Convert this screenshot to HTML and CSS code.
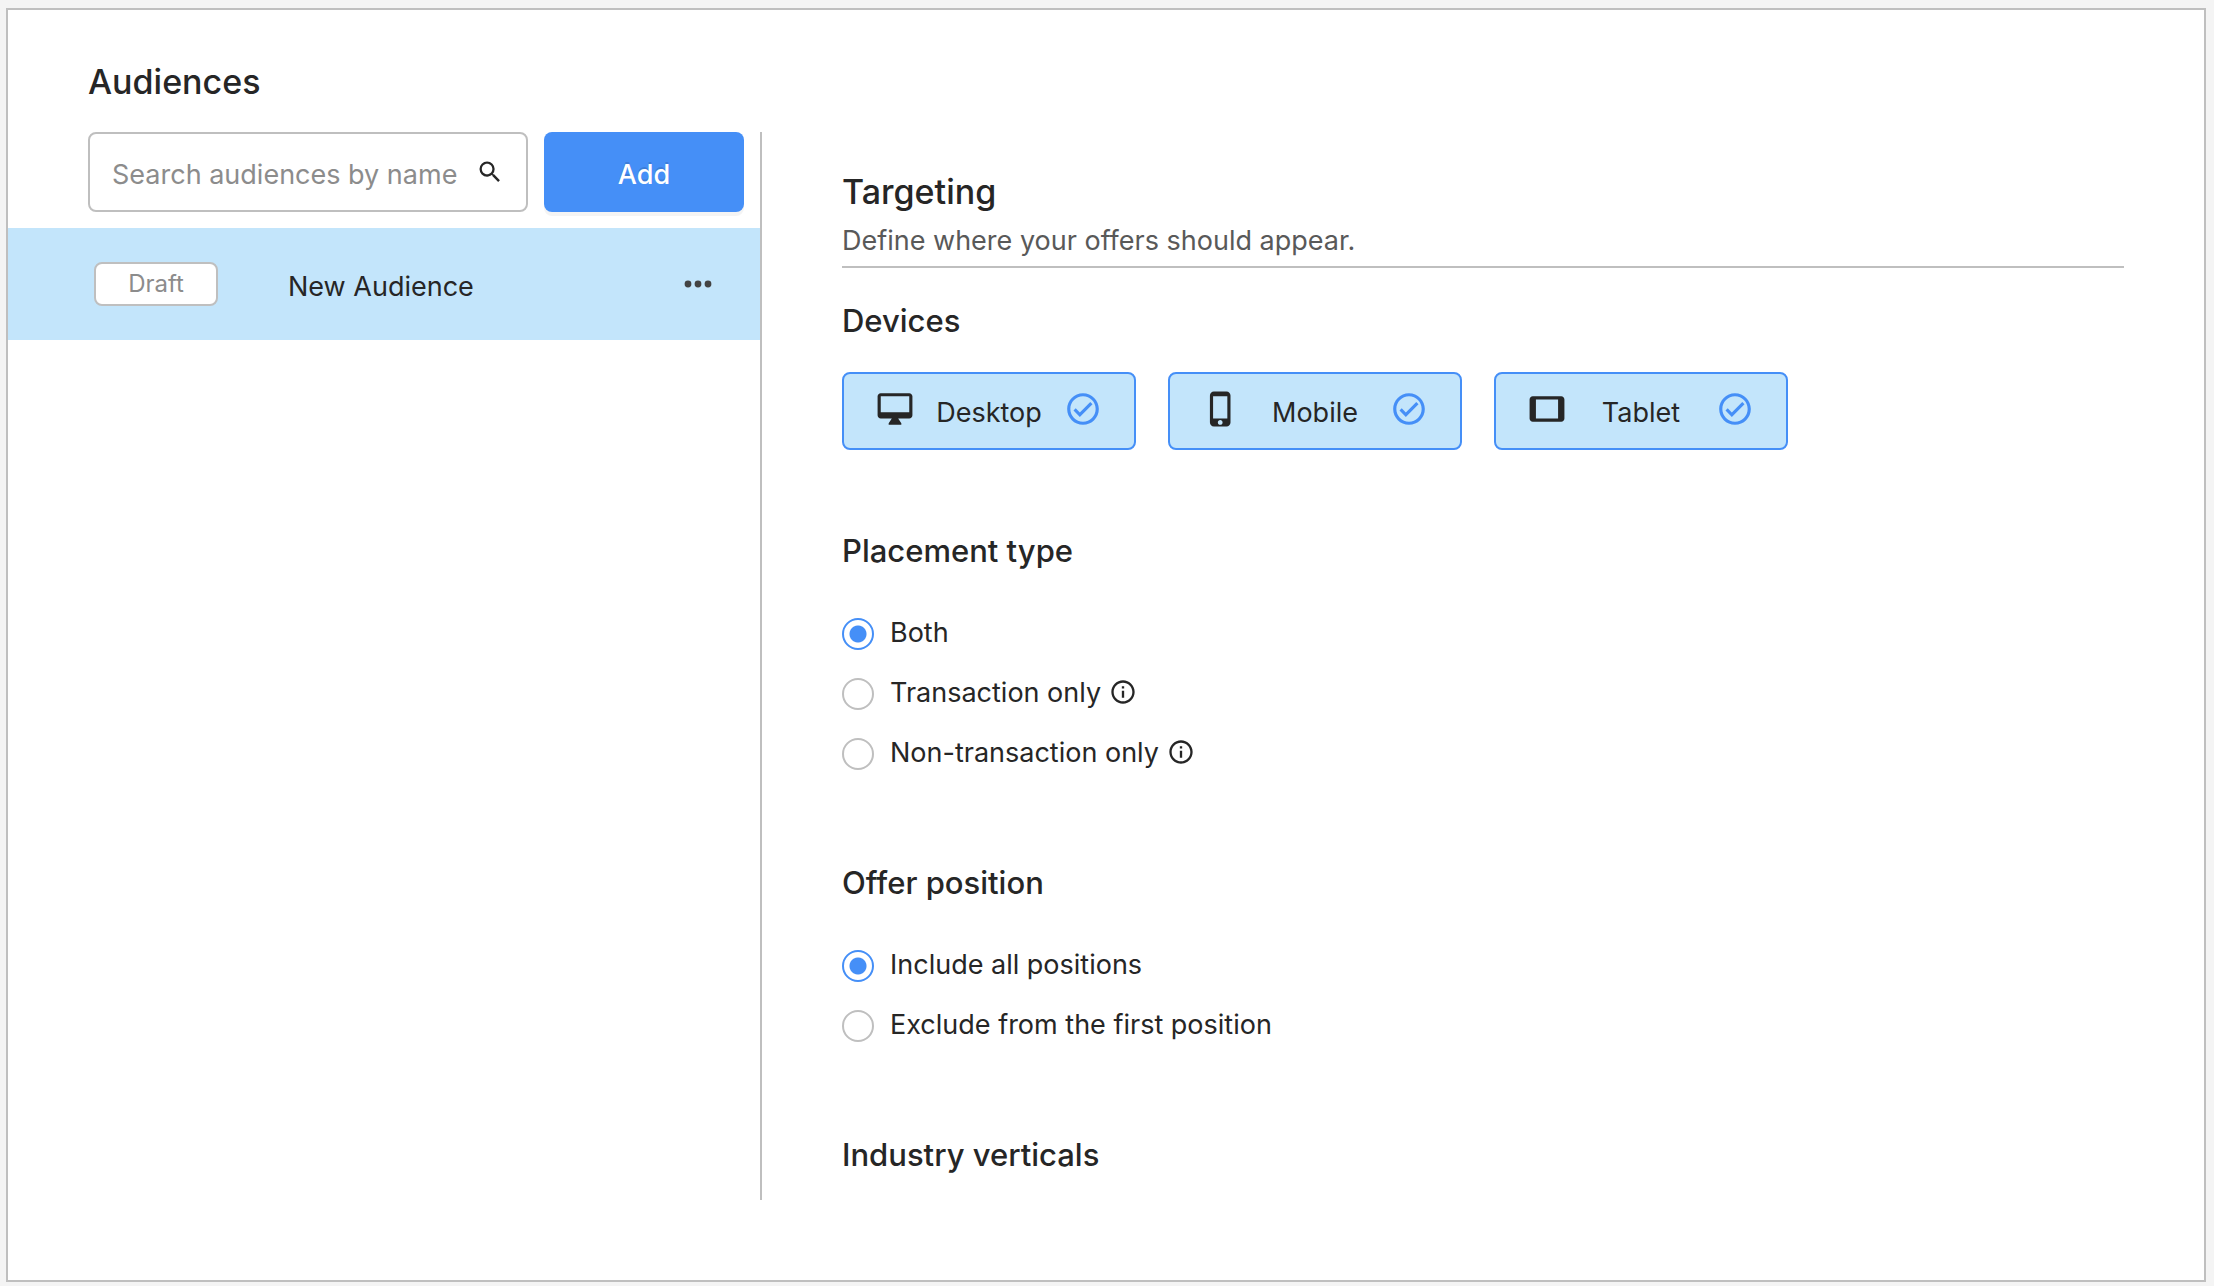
FILE: index.html
```html
<!DOCTYPE html>
<html lang="en">
    <head>
        <meta charset="utf-8">
        <title>Audiences</title>
        <link rel="stylesheet" href="styles.css">
    </head>
    <body>
        <main class="panel">
            <h1 class="title">Audiences</h1>
            <div class="columns">
                <aside class="sidebar">
                    <div class="toolbar">
                        <div class="search">
                            <input class="search-input" type="text" placeholder="Search audiences by name" aria-label="Search audiences by name">
                            <svg class="search-icon" viewBox="0 0 24 24"><path d="M15.5 14h-.79l-.28-.27A6.47 6.47 0 0 0 16 9.5 6.5 6.5 0 1 0 9.5 16c1.61 0 3.09-.59 4.23-1.57l.27.28v.79l5 4.99L20.49 19l-4.99-5zm-6 0C7.01 14 5 11.99 5 9.5S7.01 5 9.5 5 14 7.01 14 9.5 11.99 14 9.5 14z"/></svg>
                        </div>
                        <button class="add" type="button">Add</button>
                    </div>
                    <div class="audience">
                        <span class="tag">Draft</span>
                        <span class="audience-name">New Audience</span>
                        <button class="more" type="button" aria-label="More actions">
                            <svg class="more-icon" viewBox="0 0 28 8"><circle cx="4" cy="4" r="3.4"/><circle cx="14" cy="4" r="3.4"/><circle cx="24" cy="4" r="3.4"/></svg>
                        </button>
                    </div>
                </aside>

                <div class="content">
                    <div class="intro">
                        <h2 class="title">Targeting</h2>
                        <p class="subtitle">Define where your offers should appear.</p>
                    </div>

                    <section class="section">
                        <h3 class="heading">Devices</h3>
                        <div class="devices">
                            <button class="device" type="button" aria-pressed="true">
                                <svg class="device-icon" viewBox="0 0 24 24"><path d="M21 2H3c-1.1 0-2 .9-2 2v12c0 1.1.9 2 2 2h7l-2 3v1h8v-1l-2-3h7c1.1 0 2-.9 2-2V4c0-1.1-.9-2-2-2zm0 12H3V4h18v10z"/></svg>
                                Desktop
                                <svg class="device-icon check" viewBox="0 0 24 24"><path d="M16.59 7.58L10 14.17l-2.59-2.58L6 13l4 4 8-8zM12 2C6.48 2 2 6.48 2 12s4.48 10 10 10 10-4.48 10-10S17.52 2 12 2zm0 18c-4.42 0-8-3.58-8-8s3.58-8 8-8 8 3.58 8 8-3.58 8-8 8z"/></svg>
                            </button>
                            <button class="device" type="button" aria-pressed="true">
                                <svg class="device-icon" viewBox="0 0 24 24"><path d="M15.5 1h-8C6.12 1 5 2.12 5 3.5v17C5 21.88 6.12 23 7.5 23h8c1.38 0 2.5-1.12 2.5-2.5v-17C18 2.12 16.88 1 15.5 1zm-4 21c-.83 0-1.5-.67-1.5-1.5s.67-1.5 1.5-1.5 1.5.67 1.5 1.5-.67 1.5-1.5 1.5zm4.5-4H7V4h9v14z"/></svg>
                                Mobile
                                <svg class="device-icon check" viewBox="0 0 24 24"><path d="M16.59 7.58L10 14.17l-2.59-2.58L6 13l4 4 8-8zM12 2C6.48 2 2 6.48 2 12s4.48 10 10 10 10-4.48 10-10S17.52 2 12 2zm0 18c-4.42 0-8-3.58-8-8s3.58-8 8-8 8 3.58 8 8-3.58 8-8 8z"/></svg>
                            </button>
                            <button class="device" type="button" aria-pressed="true">
                                <svg class="device-icon" viewBox="0 0 24 24"><path d="M21 4H3c-1.1 0-2 .9-2 2v12c0 1.1.9 2 2 2h18c1.1 0 2-.9 2-2V6c0-1.1-.9-2-2-2zm-2 14H5V6h14v12z"/></svg>
                                Tablet
                                <svg class="device-icon check" viewBox="0 0 24 24"><path d="M16.59 7.58L10 14.17l-2.59-2.58L6 13l4 4 8-8zM12 2C6.48 2 2 6.48 2 12s4.48 10 10 10 10-4.48 10-10S17.52 2 12 2zm0 18c-4.42 0-8-3.58-8-8s3.58-8 8-8 8 3.58 8 8-3.58 8-8 8z"/></svg>
                            </button>
                        </div>
                    </section>

                    <section class="section">
                        <h3 class="heading">Placement type</h3>
                        <div class="options">
                            <label class="option"><input class="radio" type="radio" name="placement" checked>Both</label>
                            <label class="option"><input class="radio" type="radio" name="placement">Transaction only
                                <svg class="info" viewBox="0 0 24 24"><path d="M11 7h2v2h-2zm0 4h2v6h-2zm1-9C6.48 2 2 6.48 2 12s4.48 10 10 10 10-4.48 10-10S17.52 2 12 2zm0 18c-4.41 0-8-3.59-8-8s3.59-8 8-8 8 3.59 8 8-3.59 8-8 8z"/></svg>
                            </label>
                            <label class="option"><input class="radio" type="radio" name="placement">Non-transaction only
                                <svg class="info" viewBox="0 0 24 24"><path d="M11 7h2v2h-2zm0 4h2v6h-2zm1-9C6.48 2 2 6.48 2 12s4.48 10 10 10 10-4.48 10-10S17.52 2 12 2zm0 18c-4.41 0-8-3.59-8-8s3.59-8 8-8 8 3.59 8 8-3.59 8-8 8z"/></svg>
                            </label>
                        </div>
                    </section>

                    <section class="section">
                        <h3 class="heading">Offer position</h3>
                        <div class="options">
                            <label class="option"><input class="radio" type="radio" name="position" checked>Include all positions</label>
                            <label class="option"><input class="radio" type="radio" name="position">Exclude from the first position</label>
                        </div>
                    </section>

                    <section class="section">
                        <h3 class="heading">Industry verticals</h3>
                    </section>
                </div>
            </div>
        </main>
    </body>
</html>
```
FILE: styles.css
```css
* {
    box-sizing: border-box;
}
body {
    margin: 0;
    padding: 8px 8px 4px 6px;
    background-color: #f4f4f4;
    color: #262626;
    font-family: Inter, "Liberation Sans", sans-serif;
    font-size: 27px;
}
h1, h2, h3, p {
    margin: 0;
}
button, input {
    font: inherit;
    color: inherit;
}
button {
    cursor: pointer;
}
svg {
    display: block;
    flex: none;
    fill: currentColor;
}

.panel {
    display: flex;
    flex-direction: column;
    min-height: calc(100vh - 12px);
    padding: 50px 0 80px;
    border: 2px solid #bfbfbf;
    background-color: #fff;
}
.title {
    font-size: 34px;
    font-weight: 500;
    line-height: 44px;
}
.panel > .title {
    margin: 0 80px 28px;
}
.columns {
    display: grid;
    grid-template-columns: 754px 1fr;
    flex: 1;
}

/* audience list */
.sidebar {
    border-right: 2px solid #bfbfbf;
}
.toolbar {
    display: flex;
    gap: 16px;
    padding: 0 16px 16px 80px;
}
.search {
    display: flex;
    align-items: center;
    flex: 1;
    min-width: 0;
    height: 80px;
    padding: 0 22px;
    border: 2px solid #bfbfbf;
    border-radius: 8px;
}
.search-input {
    flex: 1;
    min-width: 0;
    padding: 4px 0 0;
    border: 0;
    outline: 0;
    background: none;
}
.search-input::placeholder {
    color: #8c8c8c;
}
.search-icon {
    width: 28px;
    height: 28px;
}
.add {
    flex: none;
    width: 200px;
    padding: 4px 0 0;
    border: 0;
    border-radius: 8px;
    background-color: #458ff7;
    box-shadow: 0 4px 0 rgba(0, 0, 0, 0.045);
    color: #fff;
    font-weight: 500;
    text-shadow: 0 -2px 0 rgba(0, 0, 0, 0.12);
}
.audience {
    display: flex;
    align-items: center;
    height: 112px;
    padding: 0 48px 0 86px;
    background-color: #c3e5fb;
}
.tag {
    width: 124px;
    border: 2px solid #bfbfbf;
    border-radius: 8px;
    background-color: #fff;
    color: #8c8c8c;
    font-size: 24px;
    line-height: 40px;
    text-align: center;
}
.audience-name {
    flex: 1;
    padding: 4px 0 0 70px;
}
.more {
    padding: 0;
    border: 0;
    background: none;
    color: #434343;
}
.more-icon {
    width: 28px;
    height: 8px;
}

/* targeting */
.content {
    padding: 38px 80px 0;
}
.intro {
    padding-bottom: 2px;
    border-bottom: 2px solid #bfbfbf;
}
.subtitle {
    margin-top: 4px;
    color: #595959;
    line-height: 46px;
}
.section {
    margin-top: 80px;
}
.intro + .section {
    margin-top: 32px;
}
.heading {
    margin-bottom: 30px;
    font-size: 31px;
    font-weight: 500;
    line-height: 42px;
}
.heading:last-child {
    margin-bottom: 0;
}
.devices {
    display: flex;
    gap: 32px;
}
.device {
    display: flex;
    align-items: center;
    justify-content: space-between;
    width: 294px;
    height: 78px;
    padding: 2px 32px 0;
    border: 2px solid #458ff7;
    border-radius: 8px;
    background-color: #c3e5fb;
}
.device-icon {
    width: 38px;
    height: 38px;
    margin-bottom: 6px;
}
.check {
    color: #458ff7;
}
.option {
    display: flex;
    align-items: center;
    height: 60px;
}
.radio {
    appearance: none;
    width: 32px;
    height: 32px;
    margin: 4px 16px 0 0;
    border: 2px solid #bfbfbf;
    border-radius: 50%;
    background-color: #fff;
}
.radio:checked {
    border-color: #458ff7;
    background-image: radial-gradient(circle, #458ff7 8px, transparent 9px);
}
.info {
    width: 28px;
    height: 28px;
    margin-left: 8px;
}
```
